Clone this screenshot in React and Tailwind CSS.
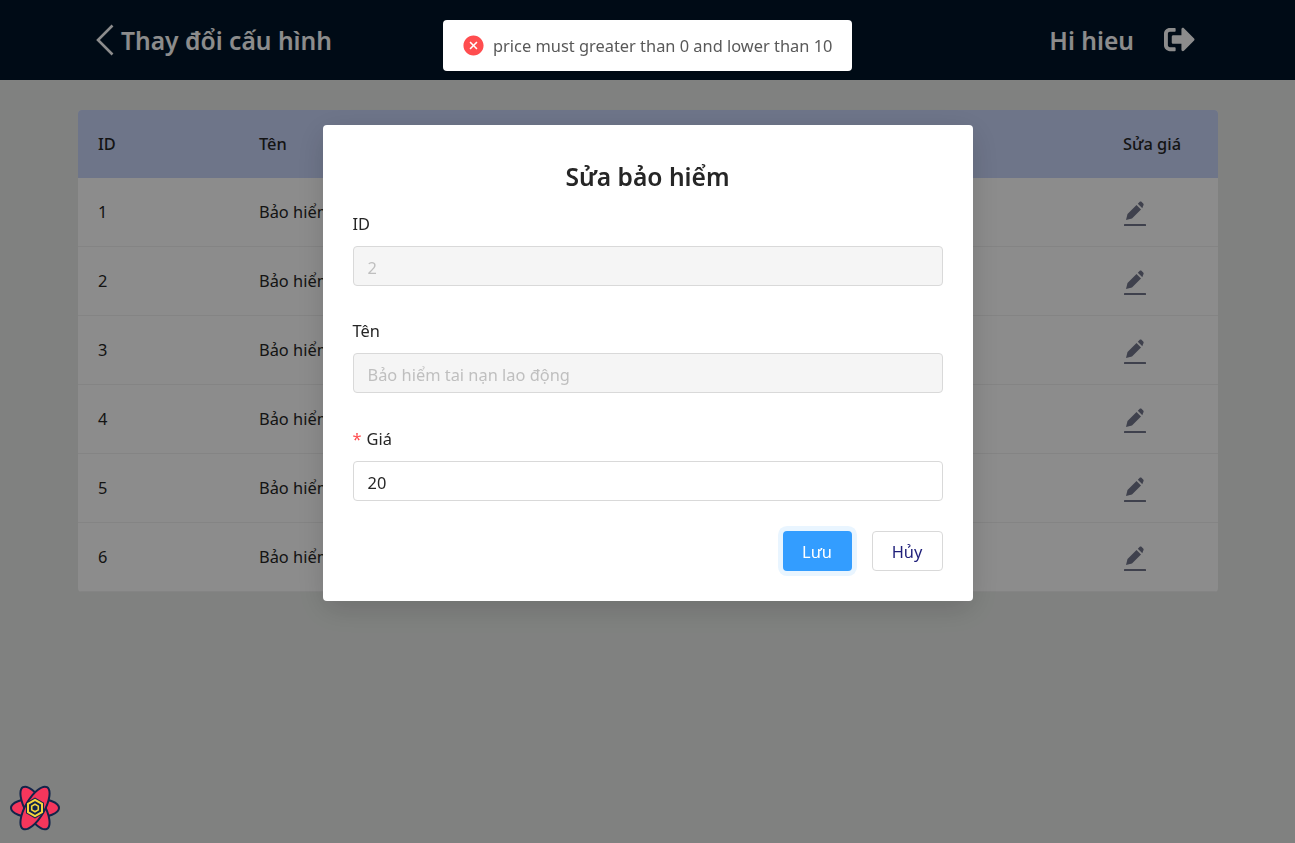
import React from 'react';
import { AiFillCloseCircle } from 'react-icons/ai';
import { FaSignOutAlt } from 'react-icons/fa';

const rows = [
  { id: 1, name: 'Bảo hiểm xã hội' },
  { id: 2, name: 'Bảo hiểm tai nạn lao động' },
  { id: 3, name: 'Bảo hiểm y tế' },
  { id: 4, name: 'Bảo hiểm thất nghiệp' },
  { id: 5, name: 'Bảo hiểm nhân thọ' },
  { id: 6, name: 'Bảo hiểm sức khỏe' },
];

const Logo = () => (
  <svg className="w-[50px] h-[46px]" viewBox="0 0 50 46" xmlns="http://www.w3.org/2000/svg">
    <g fill="#f5365c" stroke="#12254a" strokeWidth="2">
      <ellipse cx="25" cy="23" rx="24" ry="9.5" />
      <ellipse cx="25" cy="23" rx="24" ry="9.5" transform="rotate(60 25 23)" />
      <ellipse cx="25" cy="23" rx="24" ry="9.5" transform="rotate(120 25 23)" />
    </g>
    <path d="M25 12.5 34 17.7V28.3L25 33.5 16 28.3V17.7Z" fill="#12254a" />
    <path d="M25 14.8 32 18.9V27.1L25 31.2 18 27.1V18.9Z" fill="none" stroke="#f5d63d" strokeWidth="2" />
    <path d="M25 19.2 28.3 21.1V24.9L25 26.8 21.7 24.9V21.1Z" fill="none" stroke="#f5d63d" strokeWidth="1.6" />
  </svg>
);

const EditIcon = () => (
  <svg className="w-[22px] h-[26px] ml-px mt-0.5 text-[#74778c] block" viewBox="0 0 22 26" fill="currentColor" xmlns="http://www.w3.org/2000/svg">
    <path d="M2 20 3.5 14 12.5 5 17 9.5 8 18.5Z" />
    <path d="M13.8 3.7 15.5 2C16.2 1.4 17 1.4 17.7 2L19.2 3.5C19.8 4.2 19.8 5 19.2 5.7L18.3 8.2Z" />
    <rect x="0" y="24" width="22" height="2" rx="0.5" />
  </svg>
);

const BackIcon = () => (
  <svg className="w-[18px] h-[32px]" viewBox="0 0 18 32" fill="none" stroke="currentColor" strokeWidth="2.6" xmlns="http://www.w3.org/2000/svg">
    <path d="M16.5 1.5 2 16 16.5 30.5" />
  </svg>
);

const Field = ({ label, value, required, disabled, className }) => (
  <div className={className}>
    <label className="block h-6 mb-2.5 leading-6 text-[#262626]">
      {required && <span className="text-[#ff4d4f] mr-[5px]">*</span>}
      {label}
    </label>
    <input
      readOnly
      value={value}
      className={`block w-full h-10 px-3.5 pt-0.5 border border-[#d9d9d9] rounded-sm outline-none ${disabled ? 'bg-[#f5f5f5] text-[#bfbfbf]' : 'bg-white text-[#262626]'}`}
    />
  </div>
);

const App = () => {
  return (
    <div className="relative min-h-[843px] bg-[#e9ece9] font-['Noto_Sans','Open_Sans',sans-serif] text-[16.4px] overflow-hidden">
      <header className="h-20 bg-[#001529] text-white flex items-center justify-between pl-[96px] pr-[100px]">
        <div className="flex items-center gap-[7px]">
          <BackIcon />
          <span className="text-[24.6px] font-semibold pt-0.5">Thay đổi cấu hình</span>
        </div>
        <div className="flex items-center gap-[30px]">
          <span className="text-[24.6px] font-semibold pt-0.5">Hi hieu</span>
          <FaSignOutAlt size={31} />
        </div>
      </header>

      <main className="px-[78px] pt-[30px]">
        <table className="w-[1140px] bg-white rounded-sm overflow-hidden border-separate border-spacing-0">
          <thead>
            <tr className="h-[68px] bg-[#c8d5f9] text-[#262626] text-left">
              <th className="w-[181px] pl-5 font-medium">ID</th>
              <th className="font-medium">Tên</th>
              <th className="w-[95px] font-medium">Sửa giá</th>
            </tr>
          </thead>
          <tbody>
            {rows.map((r) => (
              <tr key={r.id} className="h-[69px] text-[#262626]">
                <td className="pl-5 border-b border-[#f0f0f0]">{r.id}</td>
                <td className="border-b border-[#f0f0f0]">{r.name}</td>
                <td className="border-b border-[#f0f0f0]">
                  <EditIcon />
                </td>
              </tr>
            ))}
          </tbody>
        </table>
      </main>

      <div className="fixed inset-0 bg-black/45 flex justify-center pt-[125px]">
        <div className="w-[650px] h-[476px] bg-white rounded-sm shadow-[0_8px_30px_rgba(0,0,0,0.15)] px-[30px] pt-[30px]">
          <h2 className="h-11 mb-[13px] text-center text-[24.6px] leading-11 font-semibold text-[#262626]">Sửa bảo hiểm</h2>
          <Field label="ID" value="2" disabled className="mb-[33px]" />
          <Field label="Tên" value="Bảo hiểm tai nạn lao động" disabled className="mb-[34px]" />
          <Field label="Giá" value="20" required className="mb-[30px]" />
          <div className="flex justify-end gap-5">
            <button className="w-[69px] h-10 pt-0.5 rounded-sm bg-[#339dff] text-white ring-[5px] ring-[#e9f5ff]">Lưu</button>
            <button className="w-[71px] h-10 pt-0.5 rounded-sm bg-white border border-[#d9d9d9] text-[#1f1f7a]">Hủy</button>
          </div>
        </div>
      </div>

      <div className="fixed bottom-[12px] left-[10px]">
        <Logo />
      </div>

      <div className="fixed top-5 left-[443px] w-[409px] h-[51px] bg-white rounded-sm shadow-md flex items-center pl-[19px] gap-2 text-[#595959]">
        <AiFillCloseCircle size={23} className="text-[#ff4d4f]" />
        <span className="pt-0.5">price must greater than 0 and lower than 10</span>
      </div>
    </div>
  );
};

export default App;
